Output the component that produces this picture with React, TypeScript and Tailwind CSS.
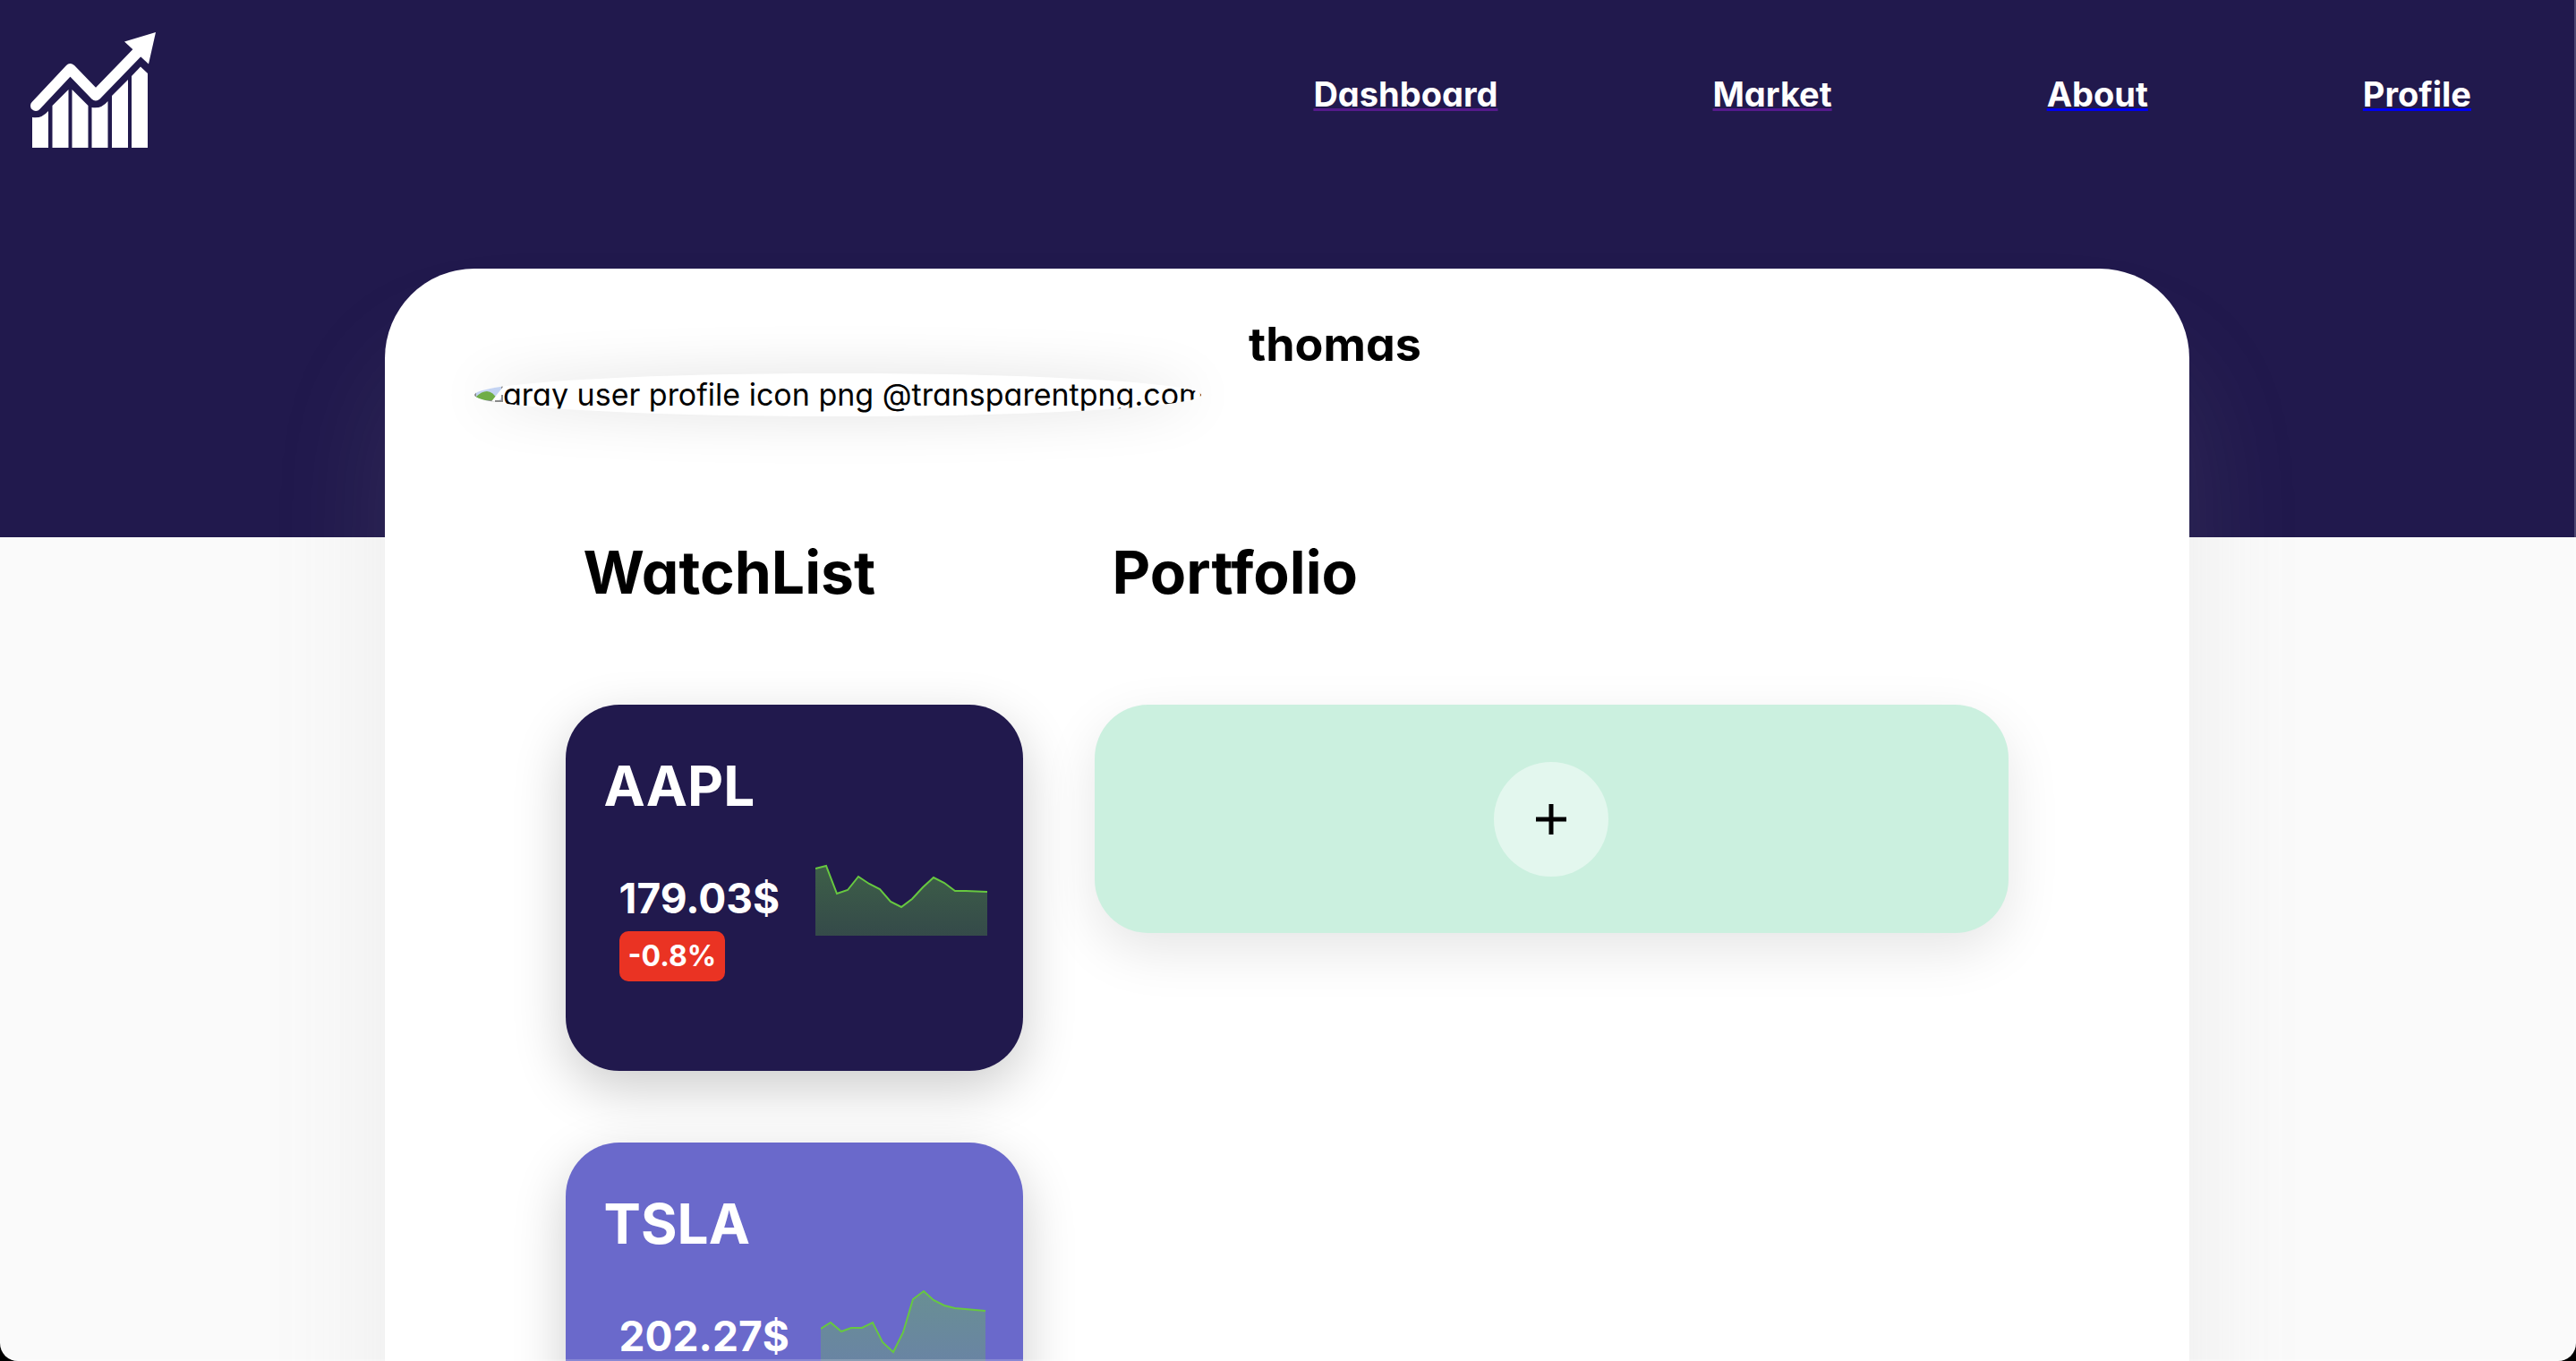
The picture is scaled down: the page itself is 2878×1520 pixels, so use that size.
type Stock = {
  symbol: string;
  price: string;
  change?: string;
  tone: string;
  width: number;
  chartClass: string;
  points: string;
};

const stocks: Stock[] = [
  {
    symbol: "AAPL",
    price: "179.03$",
    change: "-0.8%",
    tone: "bg-[#21194d]",
    width: 192,
    chartClass: "mt-[10px] mr-10 h-[84px] w-[192px] shrink-0",
    points:
      "0,9 12,6 24,37 36,33 48,18 60,26 72,32 84,46 96,52 108,43 120,30 132,19 144,25 156,34 168,34 192,35",
  },
  {
    symbol: "TSLA",
    price: "202.27$",
    tone: "bg-[#6a69cb]",
    width: 184,
    chartClass: "mt-px mr-[42px] h-[84px] w-[184px] shrink-0",
    points:
      "0,43 11,36 23,46 34,42 46,42 58,36 69,58 81,69 92,47 103,10 115,1 126,11 138,17 150,20 184,23",
  },
];

const links = [
  { label: "Dashboard", line: "decoration-[#551a8b]" },
  { label: "Market", line: "decoration-[#551a8b]" },
  { label: "About", line: "decoration-[#0000ee]" },
  { label: "Profile", line: "decoration-[#0000ee]" },
];

function Logo() {
  return (
    <svg viewBox="34 36 140 130" className="h-[130px] w-[140px]" fill="white" aria-hidden="true">
      <path
        d="M40 118 L78.500 77 L107 106.500 L154 58"
        fill="none"
        stroke="white"
        strokeWidth="12"
        strokeLinecap="round"
        strokeLinejoin="round"
      />
      <path d="M174 36 L139 46.500 L166 71.500 Z" />
      <path d="M36 131 Q46 133 54 124 V165 H36 Z" />
      <path d="M58.500 118 L76.500 100 V165 H58.500 Z" />
      <path d="M80.500 100 L98.500 118 V165 H80.500 Z" />
      <path d="M102.500 120 Q113 122 120.500 113 V165 H102.500 Z" />
      <path d="M125 107 L143 89 V165 H125 Z" />
      <path d="M147 85 L157 74.500 L165 82 V165 H147 Z" />
    </svg>
  );
}

function BrokenImage() {
  return (
    <svg viewBox="0 0 32 32" className="h-8 w-8 shrink-0" aria-hidden="true">
      <path d="M1 1 H22 L31 10 V31 H1 Z" fill="#c3d3f2" stroke="#8a8a8a" strokeWidth="2" />
      <path d="M2 30 V26 Q8 20 14 20 Q21 20 26 30 Z" fill="#6fad47" />
      <path d="M20 35 L35 16" stroke="white" strokeWidth="6" />
      <path d="M23 31 H31 V24" fill="none" stroke="#8a8a8a" strokeWidth="2" />
    </svg>
  );
}

function Chart({ stock }: { stock: Stock }) {
  const id = `fill-${stock.symbol}`;
  return (
    <svg viewBox={`0 0 ${stock.width} 84`} className={stock.chartClass} aria-hidden="true">
      <defs>
        <linearGradient id={id} x1="0" y1="0" x2="0" y2="1">
          <stop offset="0" stopColor="#67c840" stopOpacity="0.4" />
          <stop offset="1" stopColor="#67c840" stopOpacity="0.28" />
        </linearGradient>
      </defs>
      <polygon points={`0,84 ${stock.points} ${stock.width},84`} fill={`url(#${id})`} />
      <polyline points={stock.points} fill="none" stroke="#67c840" strokeWidth="2" />
    </svg>
  );
}

function StockCard({ stock }: { stock: Stock }) {
  return (
    <article
      className={`flex h-[409px] flex-col rounded-[60px] pt-12 text-white shadow-[0_20px_60px_rgba(0,0,0,0.2)] ${stock.tone}`}
    >
      <h3 className="pl-[43px] text-[62px] leading-[86px] font-bold">{stock.symbol}</h3>
      <div className="mt-[30px] flex items-start justify-between">
        <div className="pt-[22px] pl-[60px]">
          <p className="text-[46px] leading-[60px] font-bold">{stock.price}</p>
          {stock.change && (
            <span className="mt-[7px] inline-block rounded-[10px] bg-[#ea3323] px-[10px] text-[32px] leading-[56px] font-bold">
              {stock.change}
            </span>
          )}
        </div>
        <Chart stock={stock} />
      </div>
    </article>
  );
}

export default function App() {
  return (
    <div className="h-screen bg-black font-['Inter',sans-serif] text-black [font-feature-settings:'cv11']">
      <div className="relative h-full overflow-hidden rounded-b-[20px] bg-[#fafafa]">
        <header className="h-[600px] bg-[#21194d]">
          <div className="flex items-center justify-between pt-9 pr-[117px] pl-[34px]">
            <a href="#home" aria-label="Home">
              <Logo />
            </a>
            <nav className="flex gap-[240px] pt-2">
              {links.map((link) => (
                <a
                  key={link.label}
                  href={`#${link.label.toLowerCase()}`}
                  className={`text-[38px] leading-[54px] font-bold text-white underline decoration-[3px] underline-offset-2 [text-decoration-skip-ink:none] ${link.line}`}
                >
                  {link.label}
                </a>
              ))}
            </nav>
          </div>
        </header>

        <main className="relative -mt-[300px] mr-[432px] ml-[430px] rounded-t-[100px] bg-white pb-40 shadow-[0_100px_130px_rgba(149,149,149,0.14)]">
          <section className="flex px-[100px] pt-[50px]">
            <div
              role="img"
              aria-label="gray user profile icon png @transparentpng.com"
              className="mt-[67px] flex h-12 w-[812px] overflow-hidden rounded-[50%] bg-white shadow-[0_0_60px_rgba(0,0,0,0.12)]"
            >
              <BrokenImage />
              <span className="text-[34px] leading-[48px] whitespace-nowrap">
                gray user profile icon png @transparentpng.com
              </span>
            </div>
            <h1 className="ml-[53px] text-[52px] leading-[70px] font-bold">thomas</h1>
          </section>

          <div className="mx-[10%] mt-[120px] grid grid-cols-[1fr_2fr] gap-x-20">
            <section>
              <h2 className="pl-5 text-[66px] leading-[108px] font-bold">WatchList</h2>
              <div className="mt-[94px] flex flex-col gap-20">
                {stocks.map((stock) => (
                  <StockCard key={stock.symbol} stock={stock} />
                ))}
              </div>
            </section>
            <section>
              <h2 className="pl-5 text-[66px] leading-[108px] font-bold">Portfolio</h2>
              <div className="mt-[94px] flex h-[255px] items-center justify-center rounded-[60px] bg-[#cbf0df] shadow-[0_20px_60px_rgba(0,0,0,0.1)]">
                <button
                  type="button"
                  aria-label="Add stock"
                  className="flex size-32 items-center justify-center rounded-full bg-[#e3f7ee]"
                >
                  <svg viewBox="0 0 34 34" className="size-[34px]" aria-hidden="true">
                    <path d="M17 0 V34 M0 17 H34" stroke="black" strokeWidth="5" />
                  </svg>
                </button>
              </div>
            </section>
          </div>
        </main>
        <div className="pointer-events-none absolute inset-0 rounded-b-[20px] border-r-2 border-b-2 border-white/20" />
      </div>
    </div>
  );
}
